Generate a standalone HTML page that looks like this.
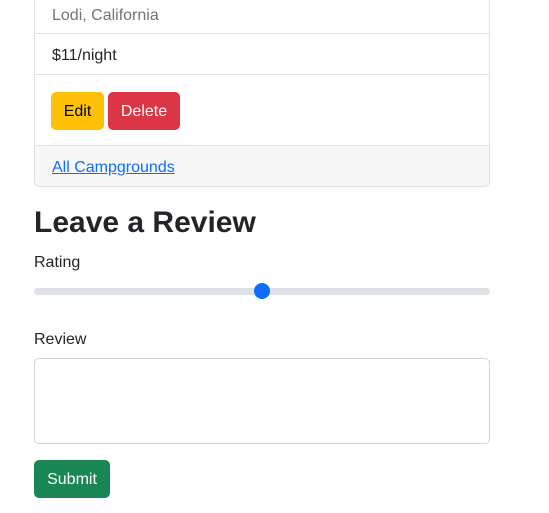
<!DOCTYPE html>
<html><head><style>
*{box-sizing:border-box;margin:0;padding:0}
body{width:549px;height:513px;overflow:hidden;background:#fff;font-family:"Liberation Sans",sans-serif;font-size:16px;color:#212529;position:relative}
.card{position:absolute;left:34px;top:-10px;width:456px;border:1px solid #dee2e6;border-radius:6px;border-top:none}
.li{border-bottom:1px solid #dee2e6;padding:0 17px;display:flex;align-items:center}
.btn{position:absolute;border-radius:5px;color:#fff;font-size:16px;display:flex;align-items:center;justify-content:center;padding-top:2px}
.abs{position:absolute}
</style></head><body>
<div class="card">
<div class="li" style="height:44px;color:#6c757d;padding-top:9px">Lodi, California</div>
<div class="li" style="height:41px;padding-top:3px">$11/night</div>
<div style="height:71px;border-bottom:1px solid #dee2e6;position:relative">
<div class="btn" style="left:16px;top:17px;width:53px;height:38px;background:#ffc107;color:#000">Edit</div>
<div class="btn" style="left:73px;top:17px;width:72px;height:38px;background:#dc3545">Delete</div>
</div>
<div style="height:40px;background:#f7f7f7;padding:3px 17px 0;display:flex;align-items:center;border-radius:0 0 6px 6px"><span style="color:#0d6efd;text-decoration:underline">All Campgrounds</span></div>
</div>
<div class="abs" style="left:34px;top:206px;font-size:30px;font-weight:bold">Leave a Review</div>
<div class="abs" style="left:34px;top:254px">Rating</div>
<div class="abs" style="left:34px;top:288px;width:456px;height:7px;background:#dee2e6;border-radius:4px"></div>
<div class="abs" style="left:254px;top:283px;width:16px;height:16px;background:#0d6efd;border-radius:50%"></div>
<div class="abs" style="left:34px;top:331px">Review</div>
<div class="abs" style="left:34px;top:358px;width:456px;height:86px;border:1px solid #ced4da;border-radius:5px"></div>
<div class="btn" style="left:34px;top:460px;width:76px;height:38px;background:#198754">Submit</div>
</body></html>
